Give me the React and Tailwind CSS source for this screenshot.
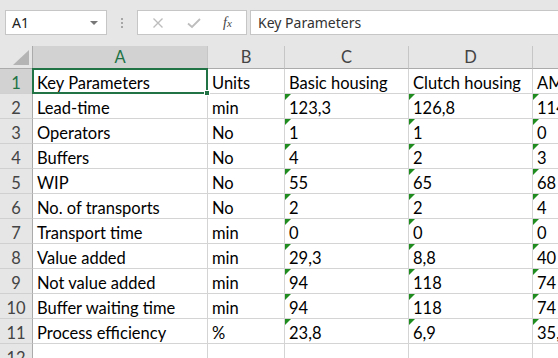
const COLS = [
  { key: 'A', w: 'w-[175px]' },
  { key: 'B', w: 'w-[77px]' },
  { key: 'C', w: 'w-[124px]' },
  { key: 'D', w: 'w-[124px]' },
  { key: 'E', w: 'w-[140px]' },
]

const ROWS = [
  ['Key Parameters', 'Units', 'Basic housing', 'Clutch housing', 'AM'],
  ['Lead-time', 'min', '123,3', '126,8', '114'],
  ['Operators', 'No', '1', '1', '0'],
  ['Buffers', 'No', '4', '2', '3'],
  ['WIP', 'No', '55', '65', '68'],
  ['No. of transports', 'No', '2', '2', '4'],
  ['Transport time', 'min', '0', '0', '0'],
  ['Value added', 'min', '29,3', '8,8', '40'],
  ['Not value added', 'min', '94', '118', '74'],
  ['Buffer waiting time', 'min', '94', '118', '74'],
  ['Process efficiency', '%', '23,8', '6,9', '35,'],
]

const cellFont = { fontFamily: 'Lato, "Liberation Sans", sans-serif' }

function FormulaBar() {
  return (
    <div className="h-[46px] bg-[#e6e6e6] flex items-start pt-[10px] pl-[5px]">
      <div className="w-[102px] shrink-0 h-[25px] bg-white border border-[#c6c6c6] flex items-center justify-between pl-[6px] pr-[8px]">
        <span className="text-[14px] text-[#222]" style={{ fontFamily: '"Noto Sans", sans-serif' }}>A1</span>
        <span className="w-0 h-0 border-l-[4px] border-r-[4px] border-t-[4px] border-l-transparent border-r-transparent border-t-[#777]" />
      </div>
      <div className="w-[30px] shrink-0 h-[25px] flex flex-col items-center justify-center gap-[2px]">
        <span className="w-[2px] h-[2px] bg-[#a6a6a6]" />
        <span className="w-[2px] h-[2px] bg-[#a6a6a6]" />
        <span className="w-[2px] h-[2px] bg-[#a6a6a6]" />
      </div>
      <div className="w-[110px] shrink-0 h-[25px] bg-white border border-[#c6c6c6] flex items-center">
        <svg width="12" height="12" viewBox="0 0 12 12" className="ml-[14px]">
          <path d="M1.5 1.5 L10.5 10.5 M10.5 1.5 L1.5 10.5" stroke="#bdbdbd" strokeWidth="1.4" fill="none" />
        </svg>
        <svg width="14" height="12" viewBox="0 0 14 12" className="ml-[23px]">
          <path d="M1 6.5 L5 10 L13 2" stroke="#bdbdbd" strokeWidth="1.8" fill="none" />
        </svg>
        <span className="ml-[22px] text-[14px] italic text-[#444]" style={{ fontFamily: '"Liberation Serif", serif' }}>
          f<span className="text-[11px]">x</span>
        </span>
      </div>
      <div className="flex-1 h-[25px] ml-[3px] bg-white border border-[#c6c6c6] border-r-0 flex items-center pl-[7px]">
        <span className="text-[14px] text-[#333]" style={{ fontFamily: '"Noto Sans", sans-serif' }}>Key Parameters</span>
      </div>
    </div>
  )
}

function HeaderRow() {
  return (
    <div className="flex h-[23px]" style={cellFont}>
      <div className="w-[33px] shrink-0 bg-[#e6e6e6] border-r border-b border-[#ababab] relative">
        <svg className="absolute right-[3px] bottom-[3px]" width="16" height="15" viewBox="0 0 16 15">
          <path d="M16 0 L16 15 L0 15 Z" fill="#b4b4b4" />
        </svg>
      </div>
      {COLS.map(c => (
        <div
          key={c.key}
          className={`${c.w} shrink-0 border-r border-b border-b-[#ababab] border-r-[#c6c6c6] flex items-center justify-center text-[16.5px] ${c.key === 'A' ? 'bg-[#d2d2d2] text-[#217346]' : 'bg-[#e6e6e6] text-[#444]'}`}
        >
          {c.key}
        </div>
      ))}
    </div>
  )
}

function DataRow({ n, cells }) {
  const active = n === 1
  return (
    <div className="flex h-[25px]" style={cellFont}>
      <div className={`w-[33px] shrink-0 border-r border-b border-r-[#ababab] border-b-[#d0d0d0] flex items-end justify-center text-[16.5px] leading-[20px] ${active ? 'bg-[#d2d2d2] text-[#217346]' : 'bg-[#e6e6e6] text-[#444]'}`}>
        {n}
      </div>
      {COLS.map((c, i) => (
        <div key={c.key} className={`${c.w} shrink-0 relative overflow-hidden bg-white border-r border-b border-[#d4d4d4] pl-[4px] flex items-end`}>
          {cells && i >= 2 && n > 1 && (
            <svg className="absolute left-0 top-0" width="6" height="6" viewBox="0 0 6 6">
              <path d="M0 0 L6 0 L0 6 Z" fill="#1e8c1e" />
            </svg>
          )}
          <span className="text-[16.5px] leading-[20px] text-black whitespace-nowrap">{cells ? cells[i] : ''}</span>
        </div>
      ))}
    </div>
  )
}

export default function App() {
  return (
    <div className="w-[558px] h-[358px] overflow-hidden bg-white">
      <FormulaBar />
      <div className="relative">
        <HeaderRow />
        {ROWS.map((r, i) => (
          <DataRow key={i} n={i + 1} cells={r} />
        ))}
        <DataRow n={12} />
        <div className="absolute left-[32px] top-[22px] w-[176px] h-[26px] border-2 border-[#217346] pointer-events-none">
          <div className="absolute -right-[4px] -bottom-[4px] w-[6px] h-[6px] bg-[#217346] border border-white" />
        </div>
      </div>
    </div>
  )
}
